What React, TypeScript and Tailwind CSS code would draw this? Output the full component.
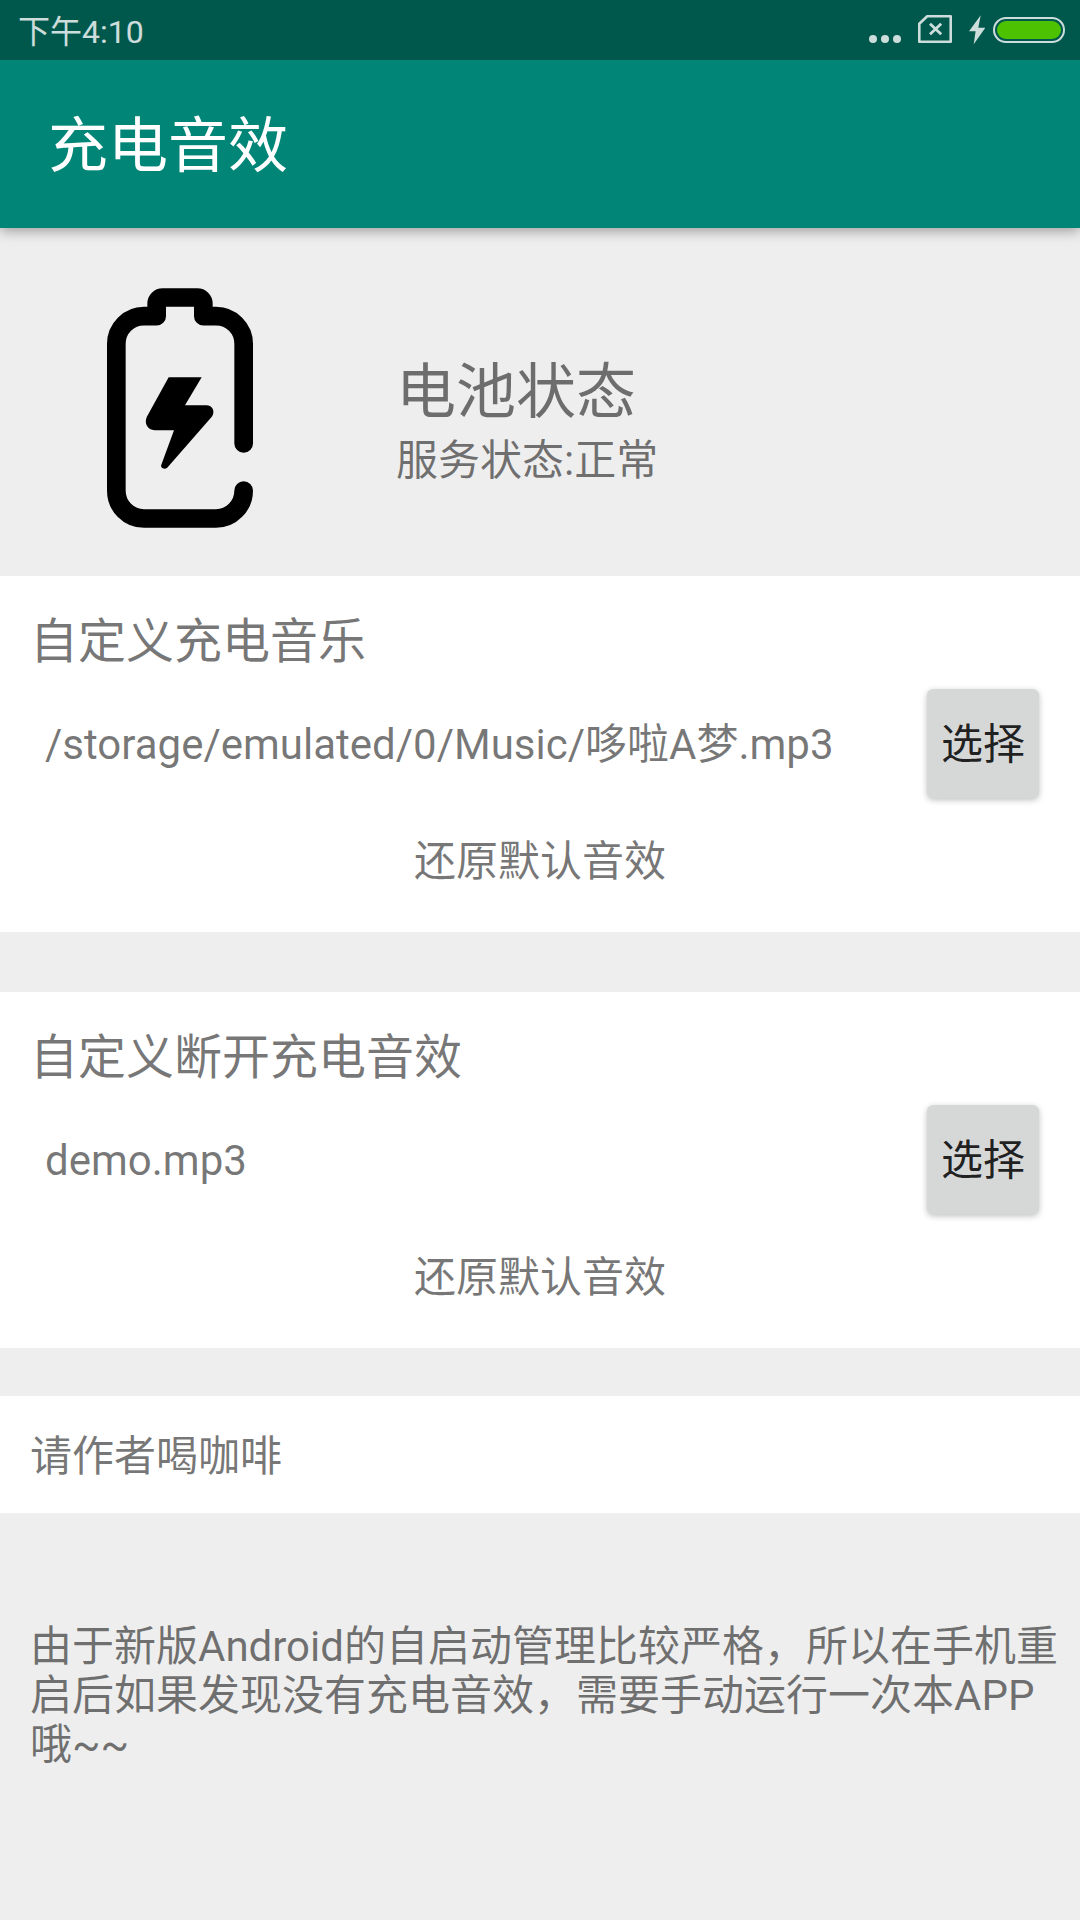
import React from 'react';

interface SoundCardProps {
  title: string;
  file: string;
}

const StatusBar: React.FC = () => (
  <div className="relative z-10 flex h-[60px] items-center justify-between bg-[#00574b] pl-[18px] pr-[15px] text-white/80">
    <span className="pt-1 text-[32px] leading-9">下午4:10</span>
    <div className="flex items-center">
      <svg className="mr-[17px] h-[30px] w-8" viewBox="0 0 32 30" fill="currentColor">
        <circle cx="4" cy="24" r="4" />
        <circle cx="16" cy="24" r="4" />
        <circle cx="28" cy="24" r="4" />
      </svg>
      <svg className="mr-[17px] h-[30px] w-[34px]" viewBox="0 0 34 30" fill="none" stroke="currentColor">
        <path d="M9.2 1.3H32.7V26.7H1.3V8.8Z" strokeWidth="2.6" strokeLinejoin="round" />
        <path d="M12 8.7L23.2 19.3M23.2 8.7L12 19.3" strokeWidth="2.8" />
      </svg>
      <svg className="mr-2 h-[30px] w-4" viewBox="0 0 16 30" fill="currentColor">
        <path d="M11.7 0.3L0 16.3H6.6L4.7 29.3L16.3 12.7H9.3Z" />
      </svg>
      <svg className="h-[30px] w-[72px]" viewBox="0 0 72 30">
        <rect x="1" y="3" width="70" height="24" rx="12" fill="none" stroke="currentColor" strokeWidth="2" />
        <rect x="4" y="6" width="64" height="18" rx="9" fill="#4cc200" />
      </svg>
    </div>
  </div>
);

const BatteryIcon: React.FC = () => (
  <svg className="h-60 w-[146px]" viewBox="51 54 438 719">
    <path
      d="M461 661A83 84 0 0 1 378 745H162A83 83 0 0 1 79 662V221A83 83 0 0 1 162 138H200V100A18 18 0 0 1 218 82H322A18 18 0 0 1 340 100V138H378A83 83 0 0 1 461 221V520"
      fill="none"
      stroke="black"
      strokeWidth="56"
      strokeLinecap="round"
      strokeLinejoin="round"
    />
    <path d="M236 321H335L285 405H349C368 405 376 424 366 439L233 591C225 600 210 594 214 584L252 480H194C173 480 161 459 171 439Z" />
  </svg>
);

const SoundCard: React.FC<SoundCardProps> = ({ title, file }) => (
  <section className="bg-white pb-[46px] pt-[38px]">
    <h2 className="pl-[30px] text-[48px] leading-[56px]">{title}</h2>
    <div className="mt-[19px] flex items-center justify-between pl-[45px] pr-[41px]">
      <span className="pt-[2px] leading-[49px]">{file}</span>
      <button className="h-[109px] w-28 shrink-0 rounded-md bg-[#d6d7d7] pt-[2px] text-black/87 shadow-[0_2px_6px_rgba(0,0,0,0.25)]">
        选择
      </button>
    </div>
    <button className="mx-auto mt-[39px] block leading-[49px]">还原默认音效</button>
  </section>
);

function App() {
  return (
    <div className="min-h-screen bg-[#eeeeee] font-[Roboto,'Noto_Sans_CJK_SC',sans-serif] text-[42px] text-black/54">
      <StatusBar />
      <header className="relative flex h-[168px] items-center bg-[#008577] px-12 pt-[6px] shadow-[0_3px_12px_rgba(0,0,0,0.35)]">
        <h1 className="text-[60px] leading-[70px] text-white">充电音效</h1>
      </header>

      <main>
        <section className="flex items-center pb-12 pt-[60px]">
          <div className="flex w-1/3 justify-center">
            <BatteryIcon />
          </div>
          <div className="pl-9 pt-[26px]">
            <h2 className="text-[60px] leading-[70px]">电池状态</h2>
            <p className="mt-2 leading-[49px]">服务状态:正常</p>
          </div>
        </section>

        <div className="flex flex-col gap-[60px]">
          <SoundCard title="自定义充电音乐" file="/storage/emulated/0/Music/哆啦A梦.mp3" />
          <SoundCard title="自定义断开充电音效" file="demo.mp3" />
        </div>

        <button className="mt-12 block w-full bg-white px-[30px] pb-8 pt-9 text-left leading-[49px]">
          请作者喝咖啡
        </button>

        <p className="pb-12 pl-[30px] pr-4 pt-[109px] leading-[49px]">
          由于新版Android的自启动管理比较严格，所以在手机重启后如果发现没有充电音效，需要手动运行一次本APP哦~~
        </p>
      </main>
    </div>
  );
}

export default App;
